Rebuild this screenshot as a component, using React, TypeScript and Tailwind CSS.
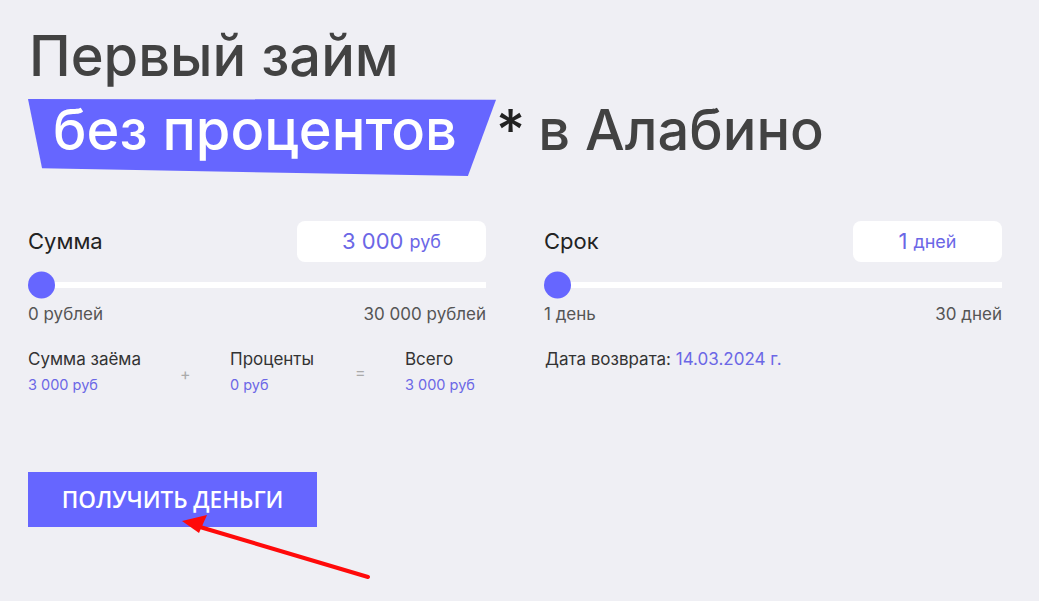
import React from 'react';

type SliderProps = {
  label: string;
  amount: string;
  unit: string;
  min: string;
  max: string;
  boxWidth: string;
};

const Slider = ({ label, amount, unit, min, max, boxWidth }: SliderProps) => (
  <div className="w-[458px]">
    <div className="flex items-center justify-between h-[41px]">
      <span className="text-[22px] text-[#222]">{label}</span>
      <div className={`${boxWidth} h-[41px] bg-white rounded-[8px] flex items-center justify-center gap-[6px] text-[#6b67e6]`}>
        <span className="text-[22px]">{amount}</span>
        <span className="text-[18px]">{unit}</span>
      </div>
    </div>
    <div className="relative mt-[20px] h-[6px] bg-white">
      <div className="absolute left-0 top-1/2 -translate-y-1/2 w-[27px] h-[27px] rounded-full bg-[#6666ff]" />
    </div>
    <div className="flex justify-between mt-[15px] text-[17px] text-[#555] leading-[22px]">
      <span>{min}</span>
      <span>{max}</span>
    </div>
  </div>
);

const Part = ({ title, value }: { title: string; value: string }) => (
  <div className="flex flex-col">
    <span className="text-[17px] text-[#333] leading-[22px]">{title}</span>
    <span className="text-[14.5px] text-[#6b67e6] leading-[18px] mt-[6px]">{value}</span>
  </div>
);

export default function App() {
  return (
    <div className="relative w-[1039px] h-[601px] bg-[#efeff4] overflow-hidden font-['Inter','Noto_Sans',sans-serif]">
      <div className="px-[28px] pt-[19px]">
        <h1 className="text-[56px] leading-[74px] text-[#424242] font-medium">
          <span className="block pl-[1px]">Первый займ</span>
          <span className="flex items-start mt-[6px] leading-[56px]">
            <span className="relative flex items-start h-[77px] w-[468px] pl-[25px] pt-[3px]">
              <span className="absolute inset-0 bg-[#6666ff] [clip-path:polygon(0_0,100%_1%,94%_100%,3%_90%)]" />
              <span className="relative text-white">без процентов</span>
            </span>
            <span className="text-[#222] pt-[3px]">*</span>
            <span className="ml-[13px] pt-[3px]">в Алабино</span>
          </span>
        </h1>

        <div className="flex gap-[58px] mt-[45px]">
          <div className="flex flex-col">
            <Slider label="Сумма" amount="3 000" unit="руб" min="0 рублей" max="30 000 рублей" boxWidth="w-[189px]" />
            <div className="flex mt-[23px]">
              <div className="w-[152px]">
                <Part title="Сумма заёма" value="3 000 руб" />
              </div>
              <span className="w-[50px] text-[#aaa] text-[16px] mt-[14px]">+</span>
              <div className="w-[125px]">
                <Part title="Проценты" value="0 руб" />
              </div>
              <span className="w-[50px] text-[#aaa] text-[16px] mt-[12px]">=</span>
              <Part title="Всего" value="3 000 руб" />
            </div>
          </div>
          <div className="flex flex-col">
            <Slider label="Срок" amount="1" unit="дней" min="1 день" max="30 дней" boxWidth="w-[149px]" />
            <div className="mt-[23px] text-[17px] leading-[22px] text-[#333] pl-[1px]">
              Дата возврата: <span className="text-[#6b67e6]">14.03.2024 г.</span>
            </div>
          </div>
        </div>

        <button className="mt-[78px] w-[289px] h-[55px] bg-[#6666ff] text-white text-[22.5px] font-semibold font-['Open_Sans',sans-serif] uppercase">
          Получить деньги
        </button>
      </div>

      {/* red pointer arrow over the button */}
      <svg className="absolute left-0 top-0 pointer-events-none" width="1039" height="601">
        <line x1="368" y1="577" x2="200" y2="527" stroke="#ff0a0a" strokeWidth="4" strokeLinecap="round" />
        <polygon points="182,521 207,515 199,533" fill="#ff0a0a" />
      </svg>
    </div>
  );
}
